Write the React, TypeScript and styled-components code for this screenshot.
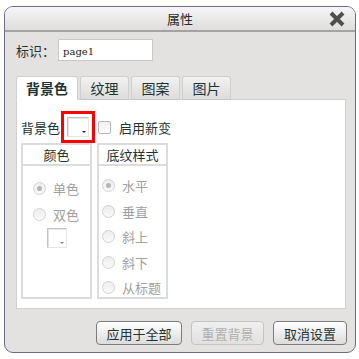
import styled, { createGlobalStyle } from "styled-components";

const GlobalStyle = createGlobalStyle`
  body {
    margin: 0;
    background: #ffffff;
    font-family: "Noto Sans CJK SC", "Liberation Sans", sans-serif;
    font-size: 13px;
    color: #1e3434;
  }
`;

function Swatch({ small }: { small?: boolean }) {
  return (
    <SwatchBox $small={small}>
      <span className="arrow" />
    </SwatchBox>
  );
}

function Radio({ label, checked }: { label: string; checked?: boolean }) {
  return (
    <RadioRow>
      <RadioDot $checked={checked} />
      <span>{label}</span>
    </RadioRow>
  );
}

function App() {
  return (
    <>
      <GlobalStyle />
      <Dialog>
        <TitleBar>
          属性
          <CloseButton>
            <svg width="18" height="16" viewBox="0 0 18 16">
              <path d="M3 2 L15 14 M15 2 L3 14" stroke="#4f4f4f" strokeWidth="4" strokeLinecap="butt" />
            </svg>
          </CloseButton>
        </TitleBar>
        <Body>
          <IdRow>
            <span>标识：</span>
            <IdInput>page1</IdInput>
          </IdRow>
          <Tabs>
            <Tab $active>背景色</Tab>
            <Tab>纹理</Tab>
            <Tab>图案</Tab>
            <Tab>图片</Tab>
          </Tabs>
          <Panel>
            <ColorRow>
              <span>背景色</span>
              <Highlight>
                <Swatch />
              </Highlight>
              <CheckBox />
              <span>启用新变</span>
            </ColorRow>
            <Groups>
              <Group>
                <GroupHead>颜色</GroupHead>
                <GroupBody $pad="13px 0 0 10px">
                  <Radio label="单色" checked />
                  <Radio label="双色" />
                  <SmallSwatchWrap>
                    <Swatch small />
                  </SmallSwatchWrap>
                </GroupBody>
              </Group>
              <Group>
                <GroupHead>底纹样式</GroupHead>
                <GroupBody $pad="10px 0 0 3px">
                  <Radio label="水平" checked />
                  <Radio label="垂直" />
                  <Radio label="斜上" />
                  <Radio label="斜下" />
                  <Radio label="从标题" />
                </GroupBody>
              </Group>
            </Groups>
          </Panel>
          <Footer>
            <Button $w={86}>应用于全部</Button>
            <Button $w={73} disabled>
              重置背景
            </Button>
            <Button $w={74}>取消设置</Button>
          </Footer>
        </Body>
      </Dialog>
    </>
  );
}
export default App;

const Dialog = styled.div`
  margin: 6px 0 0 4px;
  width: 352px;
  height: 347px;
  box-sizing: border-box;
  border: 1px solid #6c6c8c;
  border-radius: 9px;
  background: #e4e2e0;
  display: flex;
  flex-direction: column;
  overflow: hidden;
`;

const TitleBar = styled.div`
  position: relative;
  height: 23px;
  flex: none;
  border-bottom: 2px solid #a3a3a3;
  background: linear-gradient(#f6f6f6, #dedddc);
  display: flex;
  align-items: center;
  justify-content: center;
  color: #2a2a2a;
  font-size: 13px;
`;

const CloseButton = styled.div`
  position: absolute;
  right: 9px;
  top: 4px;
  width: 18px;
  height: 16px;
  display: flex;
`;

const Body = styled.div`
  flex: 1;
  display: flex;
  flex-direction: column;
  padding: 7px 8px 0 11px;
`;

const IdRow = styled.div`
  display: flex;
  align-items: center;
  gap: 3px;
  height: 22px;
`;

const IdInput = styled.div`
  width: 95px;
  height: 22px;
  box-sizing: border-box;
  border: 1px solid #c8c8c8;
  background: #fff;
  font-family: "DejaVu Serif", "Liberation Serif", serif;
  font-size: 10px;
  padding: 6px 0 0 4px;
  color: #1a1a1a;
`;

const Tabs = styled.div`
  display: flex;
  gap: 2px;
  margin-top: 15px;
  height: 24px;
  position: relative;
  z-index: 1;
`;

const Tab = styled.div<{ $active?: boolean }>`
  width: ${(p) => (p.$active ? "62px" : "49px")};
  box-sizing: border-box;
  display: flex;
  align-items: center;
  justify-content: center;
  border: 1px solid #cfcfcf;
  border-bottom: ${(p) => (p.$active ? "1px solid #fff" : "1px solid #c6c6c6")};
  border-radius: 3px 3px 0 0;
  background: ${(p) => (p.$active ? "#fff" : "linear-gradient(#f2f2f2, #dddcdb)")};
  font-weight: ${(p) => (p.$active ? 700 : 400)};
  font-size: 14px;
  color: #1e3434;
`;

const Panel = styled.div`
  width: 330px;
  height: 210px;
  box-sizing: border-box;
  border: 1px solid #d0d0d0;
  margin-top: -1px;
  background: #fff;
  padding: 11px 0 0 4px;
  display: flex;
  flex-direction: column;
`;

const ColorRow = styled.div`
  display: flex;
  align-items: center;
  height: 32px;
  span {
    font-size: 13px;
  }
`;

const Highlight = styled.div`
  width: 34px;
  height: 32px;
  box-sizing: border-box;
  border: 3px solid #f00;
  margin-left: 1px;
  display: flex;
  align-items: center;
  justify-content: center;
`;

const SwatchBox = styled.div<{ $small?: boolean }>`
  position: relative;
  width: ${(p) => (p.$small ? "20px" : "22px")};
  height: 20px;
  box-sizing: border-box;
  border: 1px solid #c4c4c4;
  border-right-color: #e6e6e6;
  border-bottom-color: #e6e6e6;
  box-shadow: inset 1px 1px 0 #e4e4e4;
  background: #fff;
  .arrow {
    position: absolute;
    right: 2px;
    bottom: 3px;
    width: 0;
    height: 0;
    border-left: 2px solid transparent;
    border-right: 2px solid transparent;
    border-top: 2px solid ${(p) => (p.$small ? "#8a8a8a" : "#222")};
  }
`;

const CheckBox = styled.div`
  width: 13px;
  height: 13px;
  box-sizing: border-box;
  border: 1px solid #b8b8b8;
  border-radius: 2px;
  background: linear-gradient(#f0f0f0, #fff);
  margin: 0 8px 0 3px;
`;

const Groups = styled.div`
  display: flex;
  gap: 5px;
`;

const Group = styled.div`
  width: 71px;
  height: 156px;
  box-sizing: border-box;
  border: 2px solid #dcdcdc;
  display: flex;
  flex-direction: column;
`;

const GroupHead = styled.div`
  height: 19px;
  border-bottom: 2px solid #dcdcdc;
  display: flex;
  align-items: center;
  justify-content: center;
  font-size: 13px;
`;

const GroupBody = styled.div<{ $pad: string }>`
  display: flex;
  flex-direction: column;
  gap: 6.6px;
  padding: ${(p) => p.$pad};
`;

const RadioRow = styled.div`
  display: flex;
  align-items: center;
  gap: 7px;
  height: 19px;
  color: #a0a0a0;
  font-size: 13px;
`;

const RadioDot = styled.div<{ $checked?: boolean }>`
  position: relative;
  width: 13px;
  height: 13px;
  box-sizing: border-box;
  border: 1px solid #d2d2d2;
  border-radius: 50%;
  background: linear-gradient(#ededed, #fafafa);
  &::after {
    content: "";
    display: ${(p) => (p.$checked ? "block" : "none")};
    position: absolute;
    left: 3px;
    top: 3px;
    width: 5px;
    height: 5px;
    border-radius: 50%;
    background: #b4b4b4;
  }
`;

const SmallSwatchWrap = styled.div`
  padding-left: 14px;
  margin-top: -2px;
`;

const Footer = styled.div`
  display: flex;
  justify-content: flex-end;
  gap: 9px;
  margin-top: 12px;
`;

const Button = styled.button<{ $w: number }>`
  width: ${(p) => p.$w}px;
  height: 24px;
  box-sizing: border-box;
  border: 1px solid #7c7c7c;
  border-radius: 4px;
  background: linear-gradient(#ffffff, #dcdcdc);
  font-family: "Noto Sans CJK SC", sans-serif;
  font-size: 13px;
  color: #1e3434;
  padding: 0;
  &:disabled {
    color: #b0b0b0;
    border-color: #c4c4c4;
    background: linear-gradient(#f0f0f0, #e0e0e0);
  }
`;
